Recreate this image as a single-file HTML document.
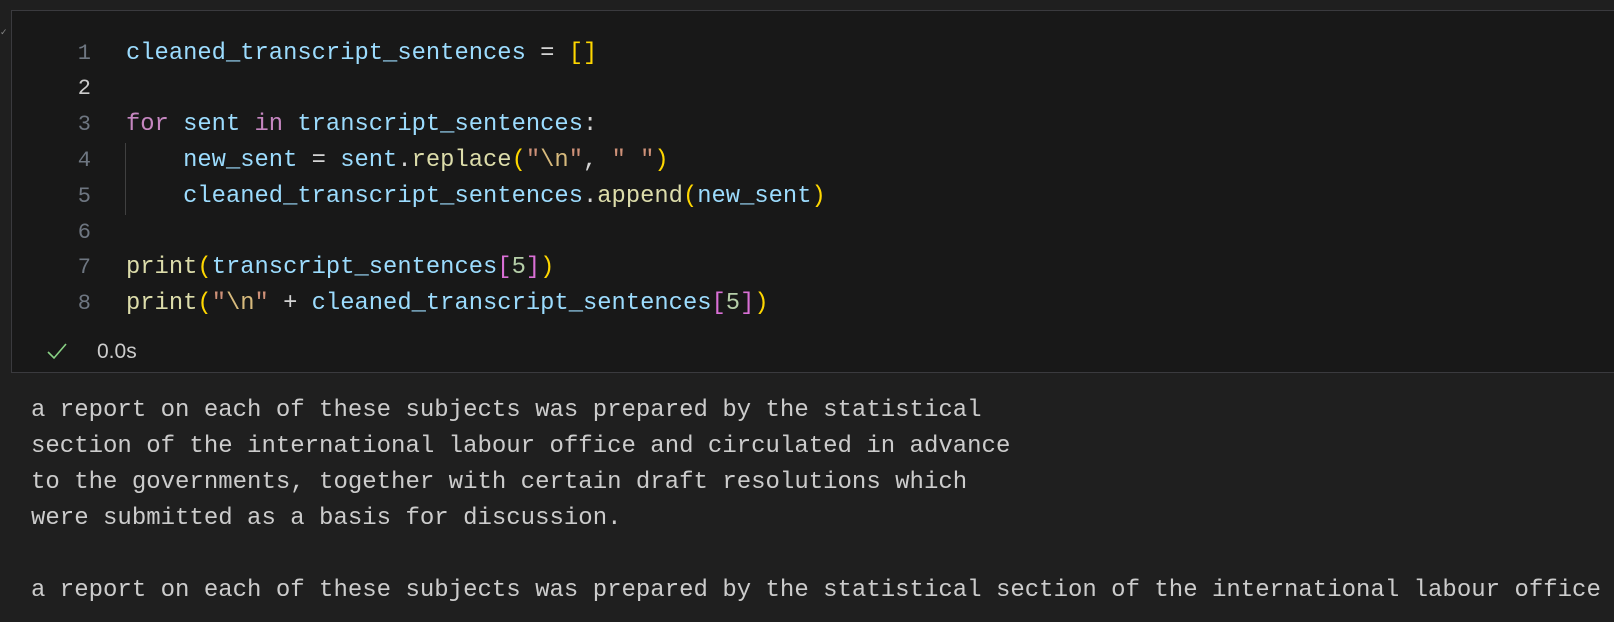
<!DOCTYPE html>
<html><head><meta charset="utf-8"><style>
html,body{margin:0;padding:0;width:1614px;height:622px;overflow:hidden;background:#1f1f1f;}
.cell{position:absolute;left:11px;top:10px;width:1620px;height:363px;background:#181818;border:1px solid #3a3a3e;box-sizing:border-box;}
.code{position:absolute;font-family:"Liberation Mono",monospace;font-size:23.8px;line-height:35.8px;white-space:pre;color:#9cdcfe;}
.ln{position:absolute;left:40px;width:51px;text-align:right;font-family:"Liberation Mono",monospace;font-size:22px;line-height:35.8px;color:#6e7681;}
.k{color:#c586c0}.f{color:#dcdcaa}.y{color:#ffd700}.m{color:#da70d6}.n{color:#b5cea8}.s{color:#ce9178}.e{color:#d7ba7d}.o{color:#d4d4d4}
.out{position:absolute;left:31px;font-family:"Liberation Mono",monospace;font-size:24px;line-height:36px;white-space:pre;color:#cccccc;}
</style></head><body>
<div style="position:absolute;left:0;top:27px;color:#888;font-size:9px;font-family:'Liberation Sans',sans-serif">&#x2713;</div>
<div class="cell"></div>
<div class="ln" style="top:35.6px">1</div>
<div class="ln" style="top:71.4px;color:#cccccc">2</div>
<div class="ln" style="top:107.2px">3</div>
<div class="ln" style="top:143px">4</div>
<div class="ln" style="top:178.8px">5</div>
<div class="ln" style="top:214.6px">6</div>
<div class="ln" style="top:250.4px">7</div>
<div class="ln" style="top:286.2px">8</div>
<div style="position:absolute;left:125px;top:143px;width:1px;height:72px;background:#404040"></div>
<div class="code" style="left:126px;top:35.6px">cleaned_transcript_sentences <span class="o">=</span> <span class="y">[]</span></div>
<div class="code" style="left:126px;top:107.2px"><span class="k">for</span> sent <span class="k">in</span> transcript_sentences<span class="o">:</span></div>
<div class="code" style="left:126px;top:143px">    new_sent <span class="o">=</span> sent<span class="o">.</span><span class="f">replace</span><span class="y">(</span><span class="s">"</span><span class="e">\n</span><span class="s">"</span><span class="o">,</span> <span class="s">" "</span><span class="y">)</span></div>
<div class="code" style="left:126px;top:178.8px">    cleaned_transcript_sentences<span class="o">.</span><span class="f">append</span><span class="y">(</span>new_sent<span class="y">)</span></div>
<div class="code" style="left:126px;top:250.4px"><span class="f">print</span><span class="y">(</span>transcript_sentences<span class="m">[</span><span class="n">5</span><span class="m">]</span><span class="y">)</span></div>
<div class="code" style="left:126px;top:286.2px"><span class="f">print</span><span class="y">(</span><span class="s">"</span><span class="e">\n</span><span class="s">"</span> <span class="o">+</span> cleaned_transcript_sentences<span class="m">[</span><span class="n">5</span><span class="m">]</span><span class="y">)</span></div>
<svg style="position:absolute;left:46px;top:341px" width="22" height="20" viewBox="0 0 22 20"><path d="M2 11 L8 17 L20 3" fill="none" stroke="#89d185" stroke-width="1.6"/></svg>
<div style="position:absolute;left:97px;top:339px;font-family:'Liberation Sans',sans-serif;font-size:21px;line-height:26px;color:#cccccc">0.0s</div>
<div class="out" style="top:392.6px">a report on each of these subjects was prepared by the statistical
section of the international labour office and circulated in advance
to the governments, together with certain draft resolutions which
were submitted as a basis for discussion.

a report on each of these subjects was prepared by the statistical section of the international labour office</div>
</body></html>
